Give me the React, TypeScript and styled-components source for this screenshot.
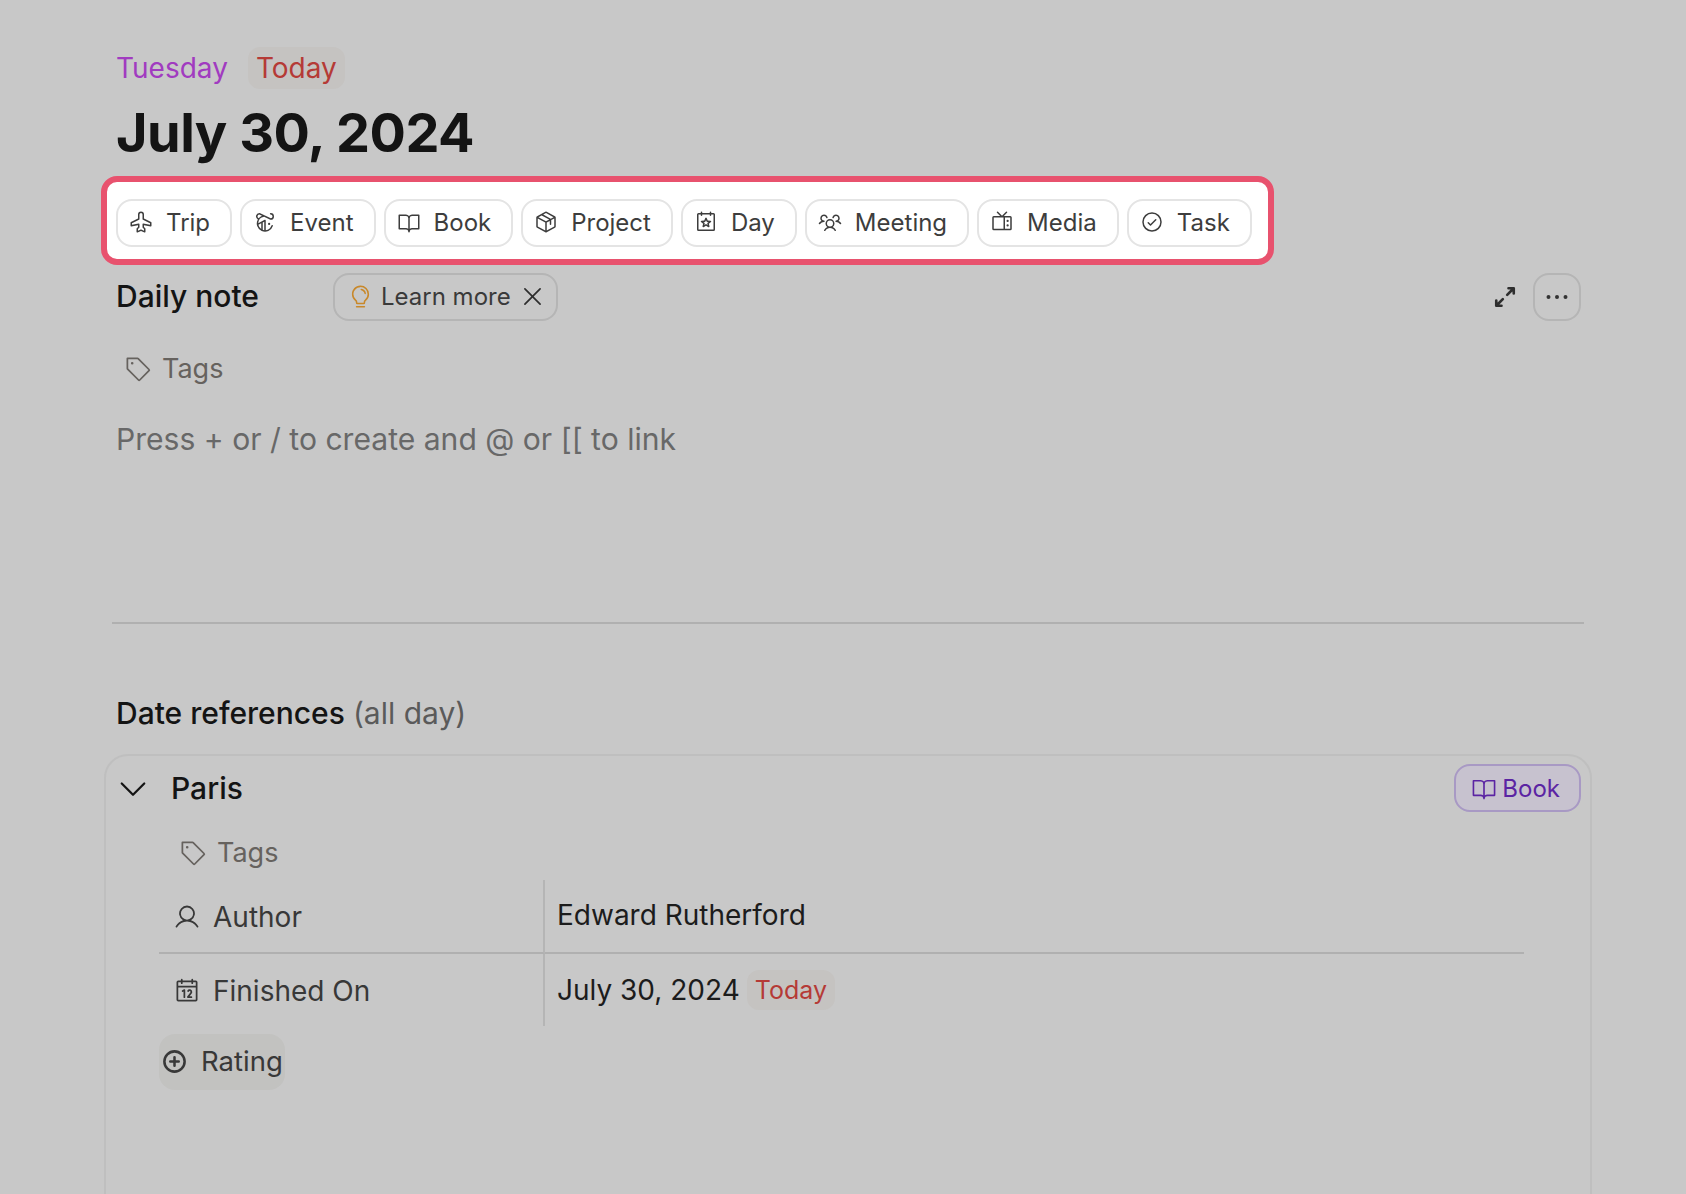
import React from "react";
import styled, { createGlobalStyle } from "styled-components";
import {
  PiAirplane,
  PiNyTimesLogo,
  PiBookOpen,
  PiPackage,
  PiCalendarStar,
  PiUsersThree,
  PiTelevision,
  PiCheckCircle,
  PiTag,
  PiUser,
  PiCalendar,
  PiLightbulb,
  PiX,
  PiPlusCircleBold,
  PiCaretDown,
  PiArrowsOutSimpleBold,
  PiDotsThreeBold,
} from "react-icons/pi";

const GlobalStyle = createGlobalStyle`
  html, body {
    margin: 0;
    height: 1194px;
    overflow: hidden;
    background: #c8c8c8;
    font-family: "Inter", "Liberation Sans", sans-serif;
    -webkit-font-smoothing: antialiased;
  }
`;

const Page = styled.div`
  width: 1686px;
  height: 1194px;
  overflow: hidden;
  box-sizing: border-box;
  padding: 46px 105px 0 116px;
`;

const DateLine = styled.div`
  display: flex;
  align-items: center;
  gap: 20px;
  font-size: 28px;
  line-height: 44px;
  height: 44px;
`;

const Weekday = styled.span`
  color: #a13bc0;
`;

const TodayBadge = styled.span<{ $small?: boolean }>`
  color: #b53a36;
  background: #c5c3c1;
  border-radius: 12px;
  padding: 0 8px;
  font-size: ${({ $small }) => ($small ? "25px" : "28px")};
  line-height: ${({ $small }) => ($small ? "40px" : "42px")};
`;

const Title = styled.h1`
  margin: 9px 0 0;
  font-size: 54px;
  line-height: 68px;
  font-weight: 700;
  color: #141414;
  letter-spacing: -0.5px;
`;

const Highlight = styled.div`
  display: inline-flex;
  gap: 8px;
  margin: 9px 0 0 -15px;
  padding: 17px 16px 12px 9px;
  background: #fff;
  border: 6px solid #e8526e;
  border-radius: 16px;
`;

const TemplateButton = styled.button`
  display: flex;
  align-items: center;
  gap: 13px;
  height: 48px;
  box-sizing: border-box;
  padding: 0 20px 2px 11px;
  background: #fff;
  border: 2px solid #e4e4e4;
  border-radius: 16px;
  font: 400 24px "Inter", sans-serif;
  color: #3d3d3d;
  svg {
    font-size: 24px;
    flex: none;
  }
`;

const NoteHeader = styled.div`
  display: flex;
  align-items: center;
  height: 48px;
  margin-top: 7px;
`;

const NoteTitle = styled.div`
  width: 217px;
  font-size: 30px;
  font-weight: 500;
  color: #141414;
`;

const LearnMore = styled.div`
  display: flex;
  align-items: center;
  gap: 8px;
  height: 48px;
  box-sizing: border-box;
  padding: 0 10px 0 13px;
  margin-top: 1px;
  border: 2px solid #b5b5b5;
  border-radius: 16px;
  font-size: 24px;
  color: #3a3a3a;
`;

const Bulb = styled(PiLightbulb)`
  color: #c8882a;
  font-size: 25px;
`;

const CloseIcon = styled(PiX)`
  font-size: 27px;
  color: #2e2e2e;
`;

const HeaderActions = styled.div`
  display: flex;
  align-items: center;
  gap: 14px;
  margin-left: auto;
  margin-top: 1px;
  color: #2e2e2e;
`;

const MoreButton = styled.div`
  width: 48px;
  height: 48px;
  box-sizing: border-box;
  border: 2px solid #b5b5b5;
  border-radius: 16px;
  display: flex;
  align-items: center;
  justify-content: center;
  font-size: 32px;
  color: #333;
`;

const TagsRow = styled.div<{ $left: number; $top: number }>`
  display: flex;
  align-items: center;
  gap: 11px;
  height: 40px;
  margin: ${({ $top }) => $top}px 0 0 ${({ $left }) => $left}px;
  font-size: 27px;
  color: #66625e;
  svg {
    font-size: 28px;
  }
`;

const Placeholder = styled.div`
  margin-top: 31px;
  font-size: 30.1px;
  line-height: 40px;
  color: #686868;
`;

const Divider = styled.hr`
  margin: 163px 0 0 -4px;
  width: 1472px;
  border: 0;
  border-top: 2px solid #b0b0b0;
`;

const SectionTitle = styled.div`
  margin-top: 69px;
  font-size: 30px;
  line-height: 40px;
  font-weight: 500;
  color: #141414;
`;

const AllDay = styled.span`
  font-weight: 400;
  color: #5a5a5a;
`;

const Card = styled.div`
  margin: 21px 0 0 -12px;
  width: 1488px;
  height: 500px;
  box-sizing: border-box;
  padding: 8px 9px 0 9px;
  border: 2px solid #bfbfbf;
  border-radius: 24px;
`;

const CardHeader = styled.div`
  display: flex;
  align-items: center;
  height: 48px;
`;

const Caret = styled(PiCaretDown)`
  font-size: 36px;
  color: #141414;
  margin-right: 20px;
`;

const CardTitle = styled.div`
  flex: 1;
  font-size: 30px;
  font-weight: 500;
  color: #141414;
`;

const TypeBadge = styled.div`
  display: flex;
  align-items: center;
  gap: 5px;
  height: 48px;
  box-sizing: border-box;
  padding: 0 19px 0 15px;
  border: 2px solid #a899c4;
  border-radius: 16px;
  background: #c7c2cf;
  color: #5b24a3;
  font-size: 24px;
  svg {
    font-size: 26px;
  }
`;

const Properties = styled.div`
  display: grid;
  grid-template-columns: 386px 1fr;
  margin: 8px 57px 0 44px;
`;

const PropertyName = styled.div<{ $first?: boolean }>`
  display: flex;
  align-items: center;
  gap: 12px;
  height: ${({ $first }) => ($first ? "74px" : "72px")};
  padding: 2px 0 0 14px;
  box-sizing: border-box;
  border-right: 2px solid #b5b5b5;
  border-bottom: ${({ $first }) => ($first ? "2px solid #b0b0b0" : "0")};
  font-size: 28px;
  color: #383838;
  svg {
    font-size: 28px;
  }
`;

const PropertyValue = styled.div<{ $first?: boolean }>`
  display: flex;
  align-items: center;
  gap: 7px;
  height: ${({ $first }) => ($first ? "74px" : "72px")};
  padding: 0 0 ${({ $first }) => ($first ? "2px" : "0")} 12px;
  box-sizing: border-box;
  border-bottom: ${({ $first }) => ($first ? "2px solid #b0b0b0" : "0")};
  font-size: 28px;
  color: #1c1c1c;
`;

const AddProperty = styled.div`
  display: inline-flex;
  align-items: center;
  gap: 13px;
  height: 56px;
  box-sizing: border-box;
  margin: 8px 0 0 44px;
  padding: 0 2px 2px 2px;
  border-radius: 16px;
  background: #c2c2c0;
  font-size: 27.5px;
  color: #383838;
  svg {
    font-size: 27px;
  }
`;

const templates = [
  { label: "Trip", Icon: PiAirplane },
  { label: "Event", Icon: PiNyTimesLogo },
  { label: "Book", Icon: PiBookOpen },
  { label: "Project", Icon: PiPackage },
  { label: "Day", Icon: PiCalendarStar },
  { label: "Meeting", Icon: PiUsersThree },
  { label: "Media", Icon: PiTelevision },
  { label: "Task", Icon: PiCheckCircle },
];

export default function App() {
  return (
    <Page>
      <GlobalStyle />
      <DateLine>
        <Weekday>Tuesday</Weekday>
        <TodayBadge>Today</TodayBadge>
      </DateLine>
      <Title>July 30, 2024</Title>
      <Highlight>
        {templates.map(({ label, Icon }) => (
          <TemplateButton key={label}>
            <Icon />
            {label}
          </TemplateButton>
        ))}
      </Highlight>
      <NoteHeader>
        <NoteTitle>Daily note</NoteTitle>
        <LearnMore>
          <Bulb />
          Learn more
          <CloseIcon />
        </LearnMore>
        <HeaderActions>
          <PiArrowsOutSimpleBold size={28} />
          <MoreButton>
            <PiDotsThreeBold />
          </MoreButton>
        </HeaderActions>
      </NoteHeader>
      <TagsRow $left={7} $top={28}>
        <PiTag />
        Tags
      </TagsRow>
      <Placeholder>Press + or / to create and @ or [[ to link</Placeholder>
      <Divider />
      <SectionTitle>
        Date references <AllDay>(all day)</AllDay>
      </SectionTitle>
      <Card>
        <CardHeader>
          <Caret />
          <CardTitle>Paris</CardTitle>
          <TypeBadge>
            <PiBookOpen />
            Book
          </TypeBadge>
        </CardHeader>
        <TagsRow $left={63} $top={20}>
          <PiTag />
          Tags
        </TagsRow>
        <Properties>
          <PropertyName $first>
            <PiUser />
            Author
          </PropertyName>
          <PropertyValue $first>Edward Rutherford</PropertyValue>
          <PropertyName>
            <PiCalendar />
            Finished On
          </PropertyName>
          <PropertyValue>
            July 30, 2024
            <TodayBadge $small>Today</TodayBadge>
          </PropertyValue>
        </Properties>
        <AddProperty>
          <PiPlusCircleBold />
          Rating
        </AddProperty>
      </Card>
    </Page>
  );
}
